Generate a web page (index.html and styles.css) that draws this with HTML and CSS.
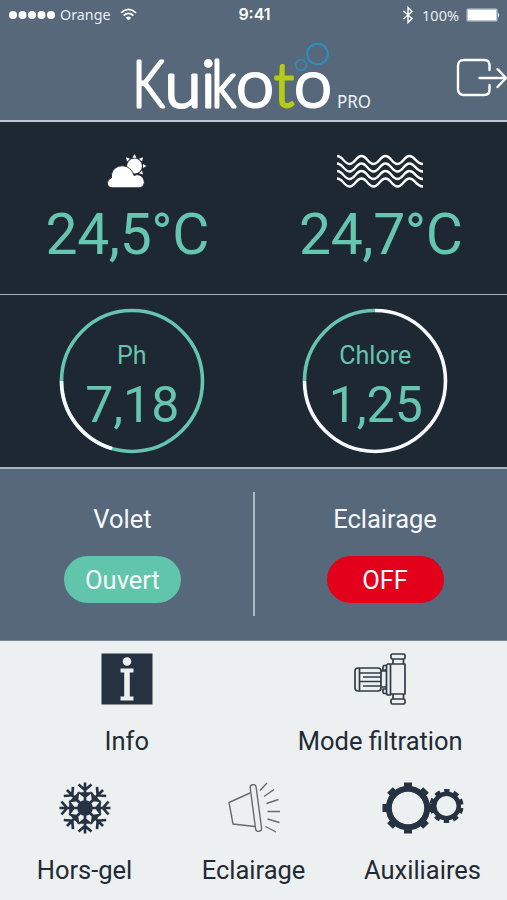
FILE: index.html
```html
<!DOCTYPE html>
<html lang="fr">
  <head>
    <meta charset="UTF-8" />
    <meta name="viewport" content="width=device-width, initial-scale=1.0" />
    <title>Kuikoto PRO</title>
    <link rel="stylesheet" href="styles.css" />
  </head>
  <body>
    <header class="header">
      <div class="status-bar">
        <div class="status-left">
          <svg width="46" height="10" viewBox="0 0 46 10" fill="#fff">
            <circle cx="4" cy="5" r="4" />
            <circle cx="13.5" cy="5" r="4" />
            <circle cx="23" cy="5" r="4" />
            <circle cx="32.5" cy="5" r="4" />
            <circle cx="42" cy="5" r="4" />
          </svg>
          <span class="carrier">Orange</span>
          <svg class="wifi" width="17" height="13" viewBox="0 0 17 13" fill="none" stroke="#fff" stroke-width="1.8">
            <path d="M1 4.8Q8.500 -2 16 4.800M3.600 7.600Q8.500 3.200 13.400 7.600" />
            <path d="M5.800 9.700Q8.500 7.200 11.200 9.700L8.500 12.500Z" fill="#fff" stroke="none" />
          </svg>
        </div>
        <div class="clock">9:41</div>
        <div class="status-right">
          <svg width="12" height="18" viewBox="0 0 12 18" fill="none" stroke="#fff" stroke-width="1.4">
            <path d="M1.500 5L10 12.500L6 16.500V1.500L10 5.500L1.500 13" />
          </svg>
          <span class="charge">100%</span>
          <svg width="34" height="14" viewBox="0 0 34 14">
            <rect x=".5" y=".5" width="31" height="13" rx="1.500" fill="#b8c6d1" />
            <rect x="2" y="2" width="28" height="10" fill="#fff" />
            <path d="M32 4.500Q34 7 32 9.500Z" fill="#fff" />
          </svg>
        </div>
      </div>
      <div class="brand">
        <svg class="logo" width="244" height="91" viewBox="130 29 244 91">
          <g class="logo-word">
            <text x="132.500" y="106.500" textLength="32" lengthAdjust="spacingAndGlyphs">K</text>
            <text x="164.500" y="106.500" textLength="37" lengthAdjust="spacingAndGlyphs">u</text>
            <text x="201" y="106.500">i</text>
            <text x="211.500" y="106.500" textLength="24.500" lengthAdjust="spacingAndGlyphs">k</text>
            <text x="236" y="106.500" font-size="67" textLength="38" lengthAdjust="spacingAndGlyphs">o</text>
            <text class="logo-green" x="274" y="106.500" textLength="20" lengthAdjust="spacingAndGlyphs">t</text>
            <text x="294" y="106.500" font-size="67" textLength="38" lengthAdjust="spacingAndGlyphs">o</text>
          </g>
          <g fill="none" stroke="#2c8fc4">
            <circle cx="301" cy="65" r="5.300" stroke-width="1.500" />
            <circle cx="317.500" cy="54" r="10.300" stroke-width="2" />
          </g>
          <text class="logo-pro" x="337" y="107.500" textLength="34" lengthAdjust="spacingAndGlyphs">PRO</text>
        </svg>
        <svg class="logout" width="51" height="42" viewBox="0 0 51 42" fill="none" stroke="#fff" stroke-width="2.400" stroke-linecap="round" stroke-linejoin="round">
          <path d="M33.500 13V8Q33.500 3 28.500 3H8Q2 3 2 9V32Q2 38 8 38H28Q33.500 38 33.500 33V28" />
          <path d="M23.500 21H50M41.500 12L50 21L41.500 30" />
        </svg>
      </div>
    </header>

    <section class="temperatures">
      <div class="temperature">
        <svg width="40" height="34" viewBox="0 0 40 34">
          <g fill="#fff">
            <circle cx="27.500" cy="12" r="7.500" />
            <path d="M27.500 0L29.500 3.700H25.500ZM36 3.300L35 7.500L32 4.700ZM39.500 12L36 14V10ZM36 20.500L32 19.300L35 16.500ZM19 3.300L23 4.700L20 7.500Z" />
            <path stroke="#1e2833" stroke-width=".9" d="M5 33.800Q0 33 .4 28.800Q.8 25 4.300 24Q4 15 11.500 12.300Q20.500 10 25.500 18L27 21.500Q32.500 19.200 35.800 23.500Q39 29 35.200 32.700Q33.800 33.800 32 33.800Z" />
          </g>
        </svg>
        <p class="temperature-value">24,5°C</p>
      </div>
      <div class="temperature">
        <svg width="88" height="34" viewBox="0 0 88 34" fill="none" stroke="#fff" stroke-width="2.300">
          <path id="wave" d="M1 2C7 2 8 10 13.500 10S20 2 25.500 2S32 10 37.500 10S44 2 49.500 2S56 10 61.500 10S68 2 73.500 2S80 10 87 10" />
          <use href="#wave" y="7.500" />
          <use href="#wave" y="15" />
          <use href="#wave" y="22.500" />
        </svg>
        <p class="temperature-value">24,7°C</p>
      </div>
    </section>

    <section class="gauges">
      <div class="gauge">
        <svg class="gauge-ring" viewBox="0 0 146 146">
          <circle class="ring-green" cx="73" cy="73" r="70.500" />
          <path class="ring-white" d="M2.500 73A70.500 70.500 0 0 0 53 140.600" />
        </svg>
        <span class="gauge-label">Ph</span>
        <span class="gauge-value">7,18</span>
      </div>
      <div class="gauge">
        <svg class="gauge-ring" viewBox="0 0 146 146">
          <path class="ring-white" d="M2.500 73A70.500 70.500 0 1 0 73 2.500" />
          <path class="ring-green" d="M2.500 73A70.500 70.500 0 0 1 73 2.500" />
        </svg>
        <span class="gauge-label">Chlore</span>
        <span class="gauge-value">1,25</span>
      </div>
    </section>

    <section class="controls">
      <div class="control">
        <span class="control-label">Volet</span>
        <button class="pill pill-on">Ouvert</button>
      </div>
      <div class="divider"></div>
      <div class="control">
        <span class="control-label">Eclairage</span>
        <button class="pill pill-off">OFF</button>
      </div>
    </section>

    <nav class="menu">
      <div class="menu-row">
        <a class="menu-item">
          <svg width="52" height="52" viewBox="0 0 52 52">
            <rect x=".5" y=".5" width="51" height="51" fill="#263241" />
            <circle cx="26" cy="8.500" r="4.300" fill="#ecf0f1" />
            <path d="M19.500 15.500H32.500V19.500H28.800V43.500H32.500V47.500H19.500V43.500H23.200V19.500H19.500Z" fill="#ecf0f1" />
          </svg>
          <span>Info</span>
        </a>
        <a class="menu-item">
          <svg width="52" height="52" viewBox="0 0 52 52" fill="none" stroke="#303b46" stroke-width="1.700" stroke-linejoin="round">
            <rect x="1" y="15" width="26" height="23" rx="3" />
            <path d="M5.500 15V38M5.500 20H27M9 24H27M5.500 28.500H27M9 33H27M27 18H33M27 34H33M5.500 24V33" />
            <path d="M33 11H36.500V42H34.500Q32.500 42 32.500 40V13Q32.500 11 34.500 11M36.500 11H51V41H36.500V18M32 12.500H30Q28.500 13 29 17H32M32 40.500H30Q28.500 40 29 36H32" />
            <rect x="37" y="1" width="14" height="5" rx="1.500" />
            <path d="M39 6V11M49.500 6V11M39 41V46M49.500 41V46" />
            <rect x="37" y="46" width="14" height="5" rx="1.500" />
          </svg>
          <span>Mode filtration</span>
        </a>
      </div>
      <div class="menu-row">
        <a class="menu-item">
          <svg width="52" height="52" viewBox="-26 -26 52 52" fill="none" stroke="#263241" stroke-width="2.700">
            <circle r="6.500" fill="#263241" />
            <g id="branches">
              <path id="branch" d="M0 -6V-25.500M-6.500 -23.500L0 -18L6.500 -23.500M-4 -14.500L0 -11.500L4 -14.500Z" />
              <use href="#branch" transform="rotate(90)" />
              <use href="#branch" transform="rotate(180)" />
              <use href="#branch" transform="rotate(270)" />
            </g>
            <use href="#branches" transform="rotate(45)" />
          </svg>
          <span>Hors-gel</span>
        </a>
        <a class="menu-item">
          <svg width="52" height="52" viewBox="0 0 52 52" fill="none" stroke="#656b70" stroke-width="1.400">
            <path d="M22 11L1 20.500L5 42L27 44.500" />
            <rect x="25" y="2.500" width="6" height="47" rx="2.800" transform="rotate(-7.500 28 27)" />
            <path d="M32 8.500L39 1M36 14.500L46 7.500M38.500 21.500L50.500 17.500M39.500 29.500H52.500M39.500 37L51.500 40.500M37.500 44.500L48 50" />
          </svg>
          <span>Eclairage</span>
        </a>
        <a class="menu-item">
          <svg width="82" height="52" viewBox="0 0 82 52" fill="none" stroke="#263241">
            <circle cx="26" cy="26" r="19.200" stroke-width="6" />
            <g fill="#263241" stroke="none">
              <g id="teeth">
                <path id="tooth" d="M22 5V.5H30V5ZM22 47H30V51.500H22Z" />
                <use href="#tooth" transform="rotate(90 26 26)" />
              </g>
              <use href="#teeth" transform="rotate(45 26 26)" />
            </g>
            <circle cx="64.500" cy="24" r="12.300" stroke-width="4.500" />
            <circle cx="64.500" cy="24" r="15.300" stroke-width="3.600" stroke-dasharray="5.400 4.213" stroke-dashoffset="-2" />
            <path d="M46 25H52" stroke-width="5" />
          </svg>
          <span>Auxiliaires</span>
        </a>
      </div>
    </nav>
  </body>
</html>
```

FILE: styles.css
```css
* {
  box-sizing: border-box;
}
body {
  margin: 0;
  height: 900px;
  font-family: Roboto, sans-serif;
  font-size: 25.5px;
  background: #ecf0f1;
  overflow: hidden;
}
svg {
  display: block;
}
.header {
  height: 122px;
  background: #566879;
  border-bottom: 2px solid #bac9d3;
}
.status-bar {
  display: grid;
  grid-template-columns: 1fr 60px 1fr;
  align-items: center;
  height: 29px;
  padding: 0 7px 0 9px;
  font-family: "Noto Sans", sans-serif;
  font-size: 15px;
  color: #fff;
}
.status-left {
  display: flex;
  align-items: center;
}
.carrier {
  margin: 0 9px 0 5px;
  font-size: 14.3px;
  color: #e9eef2;
}
.wifi {
  margin-bottom: 1px;
}
.clock {
  padding-bottom: 1px;
  text-align: center;
  font-family: Inter, sans-serif;
  font-size: 16px;
  font-weight: 600;
}
.status-right {
  display: flex;
  align-items: center;
  justify-content: flex-end;
}
.charge {
  margin: 0 7px 0 8px;
  font-size: 14.5px;
  color: #e9eef2;
}
.brand {
  display: flex;
  justify-content: space-between;
  padding-left: 130px;
}
.logout {
  margin-top: 28px;
}
.logo-word {
  font-family: Lato, sans-serif;
  font-size: 65px;
  font-weight: 300;
  fill: #fff;
  stroke: #fff;
  stroke-width: 3;
  stroke-linejoin: round;
}
.logo-green {
  font-size: 62px;
  fill: #b4cc13;
  stroke: #b4cc13;
}
.logo-pro {
  font-family: "Noto Sans", sans-serif;
  font-size: 18.5px;
  fill: #eef3f6;
}
.temperatures {
  display: grid;
  grid-template-columns: 1fr 1fr;
  height: 173px;
  padding-top: 32px;
  background: #1e2833;
  border-bottom: 1px solid #a4b0ba;
}
.temperature {
  display: flex;
  flex-direction: column;
  align-items: center;
}
.temperature-value {
  margin: 17px 0 0 1px;
  font-size: 57px;
  line-height: 60px;
  letter-spacing: -0.4px;
  color: #65c5ae;
}
.gauges {
  display: grid;
  grid-template-columns: 1fr 1fr;
  justify-items: center;
  height: 174px;
  padding: 13px 10px 0;
  background: #1e2833;
  border-bottom: 2px solid #a2b4c2;
}
.gauge {
  position: relative;
  display: flex;
  flex-direction: column;
  align-items: center;
  width: 146px;
  height: 146px;
  padding-top: 33px;
  color: #65c5ae;
}
.gauge-ring {
  position: absolute;
  inset: 0;
  fill: none;
  stroke-width: 3.6;
}
.ring-green {
  stroke: #65c5ae;
}
.ring-white {
  stroke: #f7f9ff;
}
.gauge-label {
  line-height: 30px;
  font-size: 25px;
}
.gauge-value {
  margin: 5px 0 0 1px;
  font-size: 50px;
  line-height: 58px;
}
.controls {
  display: grid;
  grid-template-columns: 245px 18px 1fr;
  justify-items: center;
  height: 172px;
  padding-top: 23px;
  background: #566879;
  border-bottom: 1px solid #76879a;
}
.control {
  display: flex;
  flex-direction: column;
  align-items: center;
  padding-top: 12px;
  color: #f5f9fc;
}
.control-label {
  line-height: 30px;
}
.pill {
  width: 117px;
  height: 47px;
  margin-top: 22px;
  padding: 0;
  border: none;
  border-radius: 24px;
  font: inherit;
  color: #f5fbfa;
}
.pill-on {
  background: #60c5aa;
}
.pill-off {
  background: #e2001a;
}
.divider {
  width: 2px;
  height: 124px;
  background: #a9bac8;
}
.menu {
  padding-top: 12px;
  color: #222a34;
}
.menu-row {
  display: grid;
  grid-auto-flow: column;
  grid-auto-columns: 1fr;
  height: 129px;
}
.menu-item {
  display: flex;
  flex-direction: column;
  align-items: center;
}
.menu-item span {
  margin-top: 21px;
  line-height: 30px;
}
```
